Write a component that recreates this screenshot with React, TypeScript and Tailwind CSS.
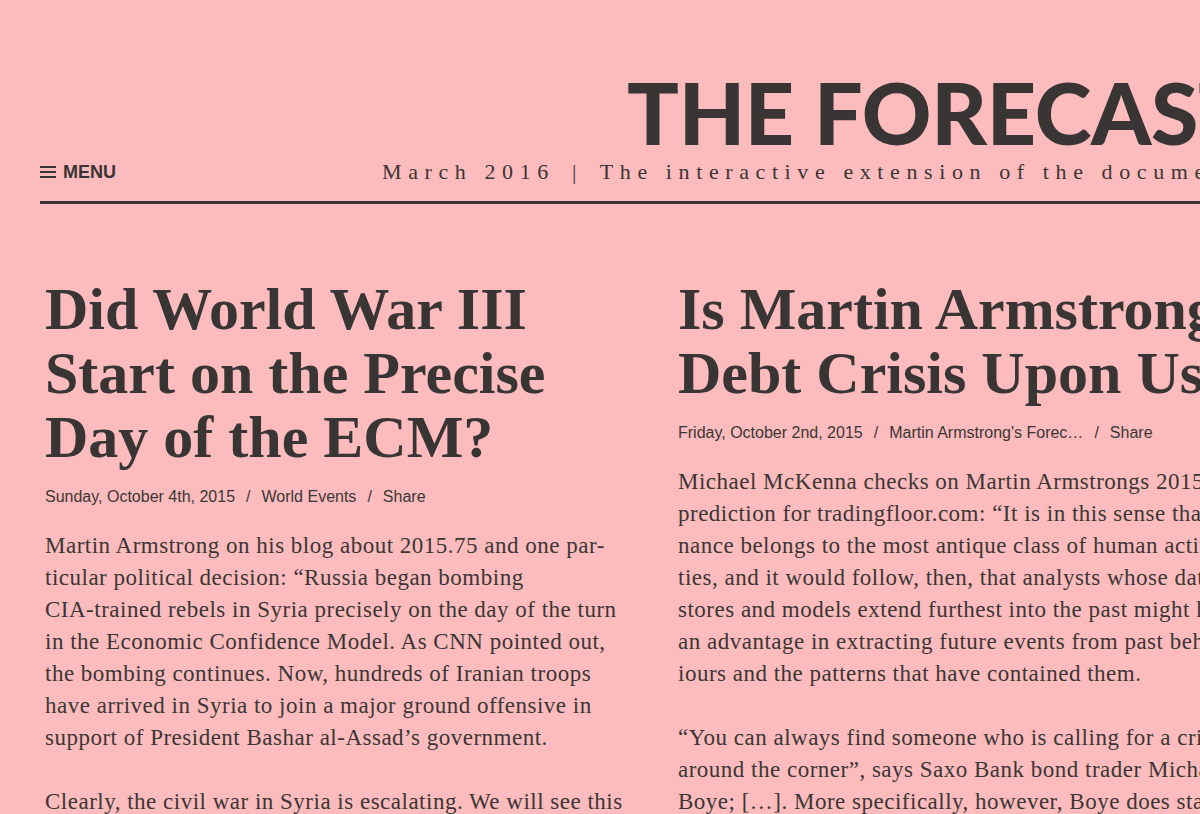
import React from "react";

const serif = { fontFamily: '"Liberation Serif", "Times New Roman", serif' };
const sans = { fontFamily: '"Liberation Sans", Arial, sans-serif' };

function Meta({ items }: { items: string[] }) {
  return (
    <div className="flex items-center whitespace-nowrap text-[16px] leading-[20px] text-[#3b3636]" style={sans}>
      {items.map((t, i) => (
        <React.Fragment key={i}>
          {i > 0 && <span className="mx-[11px]">/</span>}
          <span>{t}</span>
        </React.Fragment>
      ))}
    </div>
  );
}

function Body({ paras }: { paras: string[][] }) {
  return (
    <div className="text-[23px] leading-[32px] tracking-[0.5px] text-[#3b3636]" style={serif}>
      {paras.map((lines, i) => (
        <p key={i} className={i > 0 ? "mt-[32px]" : ""}>
          {lines.map((l, j) => (
            <span key={j} className="block whitespace-nowrap">
              {l}
            </span>
          ))}
        </p>
      ))}
    </div>
  );
}

function Headline({ lines }: { lines: string[] }) {
  return (
    <h1 className="text-[60px] leading-[64px] font-bold text-[#393535]" style={serif}>
      {lines.map((l, i) => (
        <span key={i} className="block whitespace-nowrap">
          {l}
        </span>
      ))}
    </h1>
  );
}

export default function App() {
  return (
    <div className="w-[1200px] h-[814px] overflow-hidden bg-[#fcbcbd] text-[#393535]">
      <header className="pl-[40px] pt-[69px]">
        <div
          className="h-[86px] pl-[587px] text-[86px] leading-[86px] font-black whitespace-nowrap tracking-[-0.3px]"
          style={{ fontFamily: 'Lato, "Liberation Sans", sans-serif' }}
        >
          THE FORECAST
        </div>
        <div className="mt-[5px] flex h-[24px] items-baseline whitespace-nowrap">
          <div className="flex items-center gap-[7px] self-center">
            <div className="flex w-[16px] flex-col gap-[3px]">
              <span className="block h-[2px] bg-[#393535]" />
              <span className="block h-[2px] bg-[#393535]" />
              <span className="block h-[2px] bg-[#393535]" />
            </div>
            <span className="text-[18px] font-bold leading-[24px]" style={sans}>
              MENU
            </span>
          </div>
          <div
            className="ml-[266px] text-[22px] leading-[24px] tracking-[6.6px] text-[#3b3636]"
            style={serif}
          >
            March 2016 <span className="mx-[5px]">|</span> The interactive extension of the document
          </div>
        </div>
        <div className="mt-[17px] h-[3px] w-[1400px] bg-[#393535]" />
      </header>
      <main className="flex gap-[63px] pl-[45px] pt-[73px]">
        <article className="w-[570px] shrink-0">
          <Headline lines={["Did World War III", "Start on the Precise", "Day of the ECM?"]} />
          <div className="mt-[18px]">
            <Meta items={["Sunday, October 4th, 2015", "World Events", "Share"]} />
          </div>
          <div className="mt-[23px]">
            <Body
              paras={[
                [
                  "Martin Armstrong on his blog about 2015.75 and one par-",
                  "ticular political decision: \u201CRussia began bombing",
                  "CIA-trained rebels in Syria precisely on the day of the turn",
                  "in the Economic Confidence Model. As CNN pointed out,",
                  "the bombing continues. Now, hundreds of Iranian troops",
                  "have arrived in Syria to join a major ground offensive in",
                  "support of President Bashar al-Assad\u2019s government.",
                ],
                ["Clearly, the civil war in Syria is escalating. We will see this"],
              ]}
            />
          </div>
        </article>
        <article className="w-[570px] shrink-0">
          <Headline lines={["Is Martin Armstrong\u2019s", "Debt Crisis Upon Us?"]} />
          <div className="mt-[18px]">
            <Meta items={["Friday, October 2nd, 2015", "Martin Armstrong's Forec\u2026", "Share"]} />
          </div>
          <div className="mt-[23px]">
            <Body
              paras={[
                [
                  "Michael McKenna checks on Martin Armstrongs 2015.75",
                  "prediction for tradingfloor.com: \u201CIt is in this sense that fi-",
                  "nance belongs to the most antique class of human activi-",
                  "ties, and it would follow, then, that analysts whose data",
                  "stores and models extend furthest into the past might have",
                  "an advantage in extracting future events from past behav-",
                  "iours and the patterns that have contained them.",
                ],
                [
                  "\u201CYou can always find someone who is calling for a crisis",
                  "around the corner\u201D, says Saxo Bank bond trader Michael",
                  "Boye; [\u2026]. More specifically, however, Boye does state",
                ],
              ]}
            />
          </div>
        </article>
      </main>
    </div>
  );
}
